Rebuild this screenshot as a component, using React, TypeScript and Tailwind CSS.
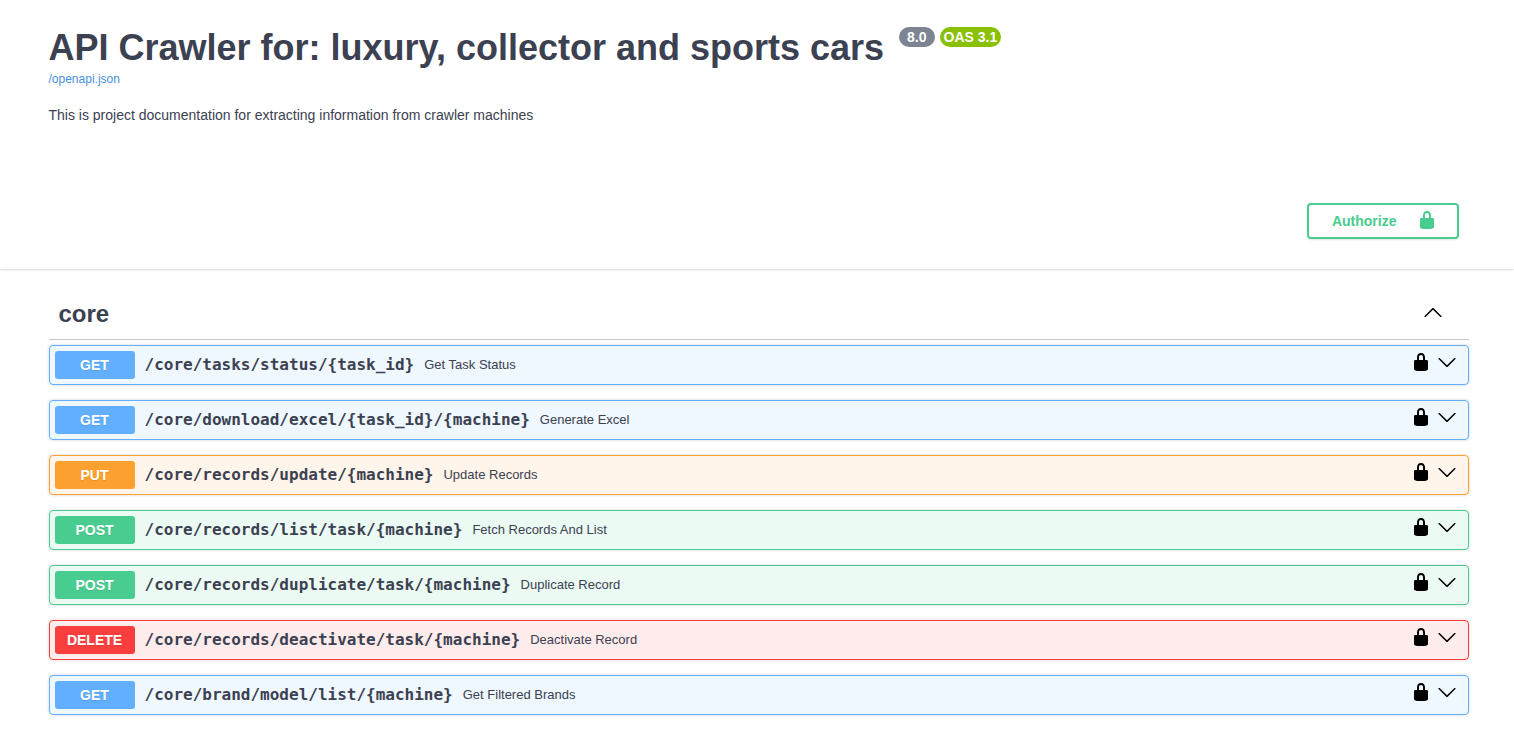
import React from "react";

type Method = "GET" | "PUT" | "POST" | "DELETE";

interface Operation {
  method: Method;
  path: string;
  summary: string;
}

const operations: Operation[] = [
  { method: "GET", path: "/core/tasks/status/{task_id}", summary: "Get Task Status" },
  { method: "GET", path: "/core/download/excel/{task_id}/{machine}", summary: "Generate Excel" },
  { method: "PUT", path: "/core/records/update/{machine}", summary: "Update Records" },
  { method: "POST", path: "/core/records/list/task/{machine}", summary: "Fetch Records And List" },
  { method: "POST", path: "/core/records/duplicate/task/{machine}", summary: "Duplicate Record" },
  { method: "DELETE", path: "/core/records/deactivate/task/{machine}", summary: "Deactivate Record" },
  { method: "GET", path: "/core/brand/model/list/{machine}", summary: "Get Filtered Brands" },
];

const rowStyles: Record<Method, string> = {
  GET: "border-[#61affe] bg-[#61affe]/10",
  PUT: "border-[#fca130] bg-[#fca130]/10",
  POST: "border-[#49cc90] bg-[#49cc90]/10",
  DELETE: "border-[#f93e3e] bg-[#f93e3e]/10",
};

const methodStyles: Record<Method, string> = {
  GET: "bg-[#61affe]",
  PUT: "bg-[#fca130]",
  POST: "bg-[#49cc90]",
  DELETE: "bg-[#f93e3e]",
};

function LockIcon() {
  return (
    <svg viewBox="0 0 20 20" className="block size-5" fill="currentColor" aria-hidden="true">
      <path d="M15.8 8H14V5.6C14 2.703 12.665 1 10 1 7.334 1 6 2.703 6 5.6V8H4c-.553 0-1 .646-1 1.199V17c0 .549.428 1.139.951 1.307l1.197.387C5.672 18.861 6.55 19 7.1 19h5.8c.549 0 1.428-.139 1.951-.307l1.196-.387c.524-.167.953-.757.953-1.306V9.199C17 8.646 16.352 8 15.8 8zM12 8H8V5.199C8 3.754 8.797 3 10 3c1.203 0 2 .754 2 2.199V8z" />
    </svg>
  );
}

function ArrowDownIcon() {
  return (
    <svg viewBox="0 0 20 20" className="block size-5" fill="currentColor" aria-hidden="true">
      <path d="M17.418 6.109c.272-.268.709-.268.979 0s.271.701 0 .969l-7.908 7.83c-.27.268-.707.268-.979 0l-7.908-7.83c-.27-.268-.27-.701 0-.969.271-.268.709-.268.979 0L10 13.25l7.418-7.141z" />
    </svg>
  );
}

function ArrowUpIcon() {
  return (
    <svg viewBox="0 0 20 20" className="block size-5" fill="currentColor" aria-hidden="true">
      <path d="M17.418 14.908c.272.268.709.268.979 0s.271-.701 0-.969l-7.908-7.83c-.27-.268-.707-.268-.979 0l-7.908 7.83c-.27.268-.27.701 0 .969.271.268.709.268.979 0L10 7.767l7.418 7.141z" />
    </svg>
  );
}

function Container({ children }: { children: React.ReactNode }) {
  return (
    <div className="pl-[3px]">
      <div className="mx-auto max-w-[1460px] px-5">{children}</div>
    </div>
  );
}

function OperationRow({ method, path, summary }: Operation) {
  return (
    <li className={`flex items-center rounded border p-[5px] shadow-[0_0_3px_rgba(0,0,0,0.19)] ${rowStyles[method]}`}>
      <button type="button" className="flex min-w-0 flex-1 items-center gap-2.5 text-left">
        <span
          className={`w-20 shrink-0 rounded-[3px] text-center text-sm leading-7 font-bold text-white [text-shadow:0_1px_0_rgba(0,0,0,0.1)] ${methodStyles[method]}`}
        >
          {method}
        </span>
        <span className="font-['DejaVu_Sans_Mono',monospace] text-base leading-5 font-semibold">{path}</span>
        <span className="text-[13px] leading-5">{summary}</span>
      </button>
      <div className="flex gap-1.5 pr-1.5 pb-1.5 text-black">
        <button type="button" aria-label="authorization button unlocked">
          <LockIcon />
        </button>
        <button type="button" aria-label={`Expand ${path}`}>
          <ArrowDownIcon />
        </button>
      </div>
    </li>
  );
}

export default function App() {
  return (
    <div className="min-h-screen bg-white font-['Liberation_Sans',Arial,sans-serif] text-[#3b4151]">
      <header className="pt-[26px] pb-[49px]">
        <Container>
          <div className="flex items-start gap-[15px]">
            <h1 className="text-4xl leading-[44px] font-bold">API Crawler for: luxury, collector and sports cars</h1>
            <div className="flex gap-[5px] pt-px text-sm leading-5 font-bold text-white">
              <span className="rounded-full bg-[#7d8492] px-2">8.0</span>
              <span className="rounded-full bg-[#89bf04] px-1">OAS 3.1</span>
            </div>
          </div>
          <a href="/openapi.json" className="block text-xs leading-[18px] text-[#4990e2]">
            /openapi.json
          </a>
          <p className="mt-[18px] text-sm leading-[18px]">
            This is project documentation for extracting information from crawler machines
          </p>
        </Container>
      </header>

      <section className="bg-white py-[30px] shadow-[0_1px_2px_rgba(0,0,0,0.15)]">
        <Container>
          <div className="flex justify-end pr-2.5">
            <button
              type="button"
              className="flex items-start gap-5 rounded border-2 border-[#49cc90] py-[5px] pr-5 pl-[23px] text-sm leading-[22px] font-bold text-[#49cc90] shadow-[0_1px_2px_rgba(0,0,0,0.1)]"
            >
              Authorize
              <LockIcon />
            </button>
          </div>
        </Container>
      </section>

      <main className="py-5">
        <Container>
          <div className="flex items-start justify-between border-b border-[#3b4151]/30 pt-2.5 pr-[26px] pb-[11px] pl-2.5">
            <h2 className="text-2xl leading-[29px] font-bold">core</h2>
            <button type="button" aria-label="Collapse operation" className="py-[3px] text-black">
              <ArrowUpIcon />
            </button>
          </div>
          <ul className="mt-[5px] flex flex-col gap-[15px]">
            {operations.map((operation) => (
              <OperationRow key={operation.path} {...operation} />
            ))}
          </ul>
        </Container>
      </main>
    </div>
  );
}
